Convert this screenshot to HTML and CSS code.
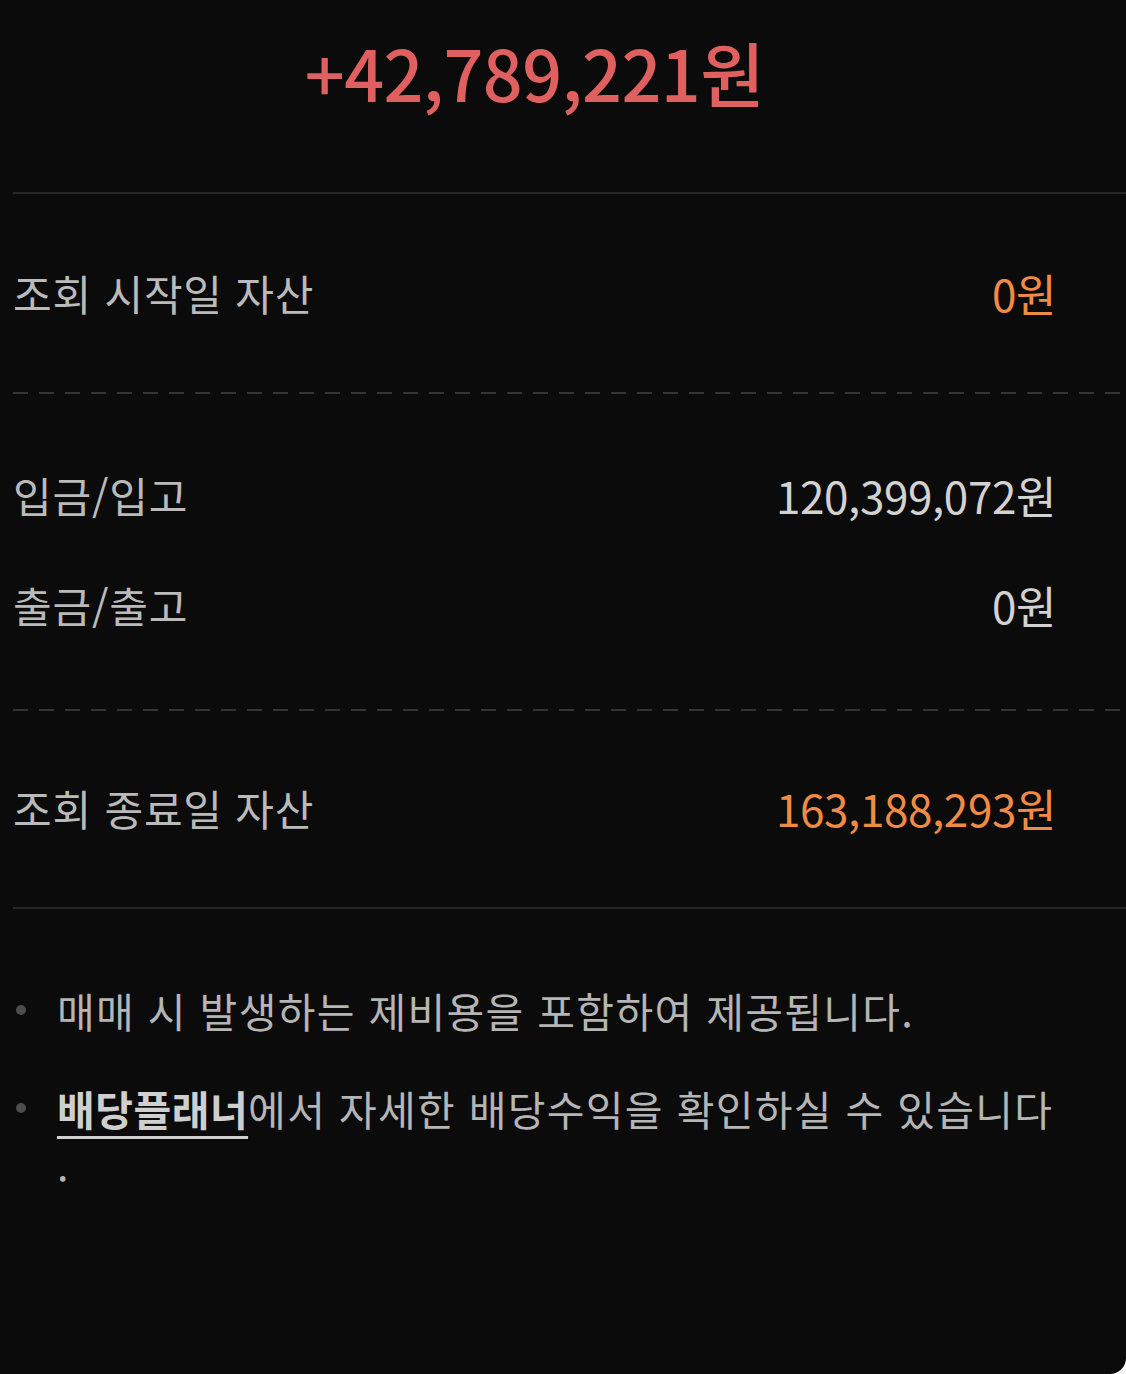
FILE: index.html
```html
<!DOCTYPE html>
<html lang="ko">
<head>
    <meta charset="UTF-8">
    <meta name="viewport" content="width=device-width, initial-scale=1.0">
    <title>수익 상세</title>
    <link rel="stylesheet" href="styles.css">
</head>
<body>
    <div class="sheet">
        <div class="profit-head">
            <span class="profit-total">+42,789,221원</span>
        </div>

        <div class="divider"></div>

        <div class="row-block">
            <div class="row">
                <span class="row-label">조회 시작일 자산</span>
                <span class="row-value orange">0원</span>
            </div>
        </div>

        <div class="divider dashed"></div>

        <div class="row-block group">
            <div class="row">
                <span class="row-label">입금/입고</span>
                <span class="row-value">120,399,072원</span>
            </div>
            <div class="row">
                <span class="row-label">출금/출고</span>
                <span class="row-value">0원</span>
            </div>
        </div>

        <div class="divider dashed"></div>

        <div class="row-block last">
            <div class="row">
                <span class="row-label">조회 종료일 자산</span>
                <span class="row-value orange">163,188,293원</span>
            </div>
        </div>

        <div class="divider"></div>

        <ul class="notes">
            <li>매매 시 발생하는 제비용을 포함하여 제공됩니다.</li>
            <li><a class="note-link" href="#">배당플래너</a>에서 자세한 배당수익을 확인하실 수 있습니다<br>.</li>
        </ul>
    </div>
</body>
</html>
```

FILE: styles.css
```css
html {
    background: #fff;
}

body {
    margin: 0;
    font-family: "Noto Sans CJK KR", "Noto Sans", sans-serif;
    color: #bcbcbc;
}

.sheet {
    background: #0b0b0b;
    min-height: 1374px;
    padding-left: 13px;
    box-sizing: border-box;
    border-bottom-right-radius: 16px;
}

.profit-head {
    padding: 30px 70px 78px 0;
    text-align: center;
}
.profit-total {
    font-size: 70px;
    line-height: 84px;
    font-weight: 500;
    letter-spacing: -0.5px;
    color: #e0605f;
}

.divider {
    height: 2px;
    background: #272727;
}
.divider.dashed {
    background: repeating-linear-gradient(to right, #343434 0, #343434 15px, transparent 15px, transparent 26px);
}

.row-block {
    padding: 78px 70px 78px 0;
}
.row-block.group {
    padding: 80px 70px 83px 0;
    display: flex;
    flex-direction: column;
    gap: 68px;
}
.row-block.last {
    padding: 76px 70px 78px 0;
}

.row {
    display: flex;
    justify-content: space-between;
    align-items: center;
    height: 42px;
}
.row-label {
    font-size: 42px;
    line-height: 42px;
    letter-spacing: 0.8px;
    color: #bababa;
}
.row-value {
    font-size: 44px;
    line-height: 42px;
    letter-spacing: -0.4px;
    color: #d2d2d2;
}
.row-value.orange {
    color: #f08b45;
}

.notes {
    list-style: none;
    margin: 0;
    padding: 73px 60px 0 0;
    display: flex;
    flex-direction: column;
    gap: 42px;
}
.notes li {
    position: relative;
    padding-left: 44px;
    font-size: 41px;
    line-height: 56px;
    letter-spacing: 1.3px;
    color: #b5b5b5;
}
.notes li::before {
    content: "";
    position: absolute;
    left: 3px;
    top: 23px;
    width: 10px;
    height: 10px;
    border-radius: 50%;
    background: #4d4d4d;
}
.note-link {
    color: #cfcfcf;
    font-weight: 700;
    letter-spacing: 0.5px;
    text-decoration: underline;
    text-decoration-thickness: 3px;
    text-underline-offset: 10px;
}
```
